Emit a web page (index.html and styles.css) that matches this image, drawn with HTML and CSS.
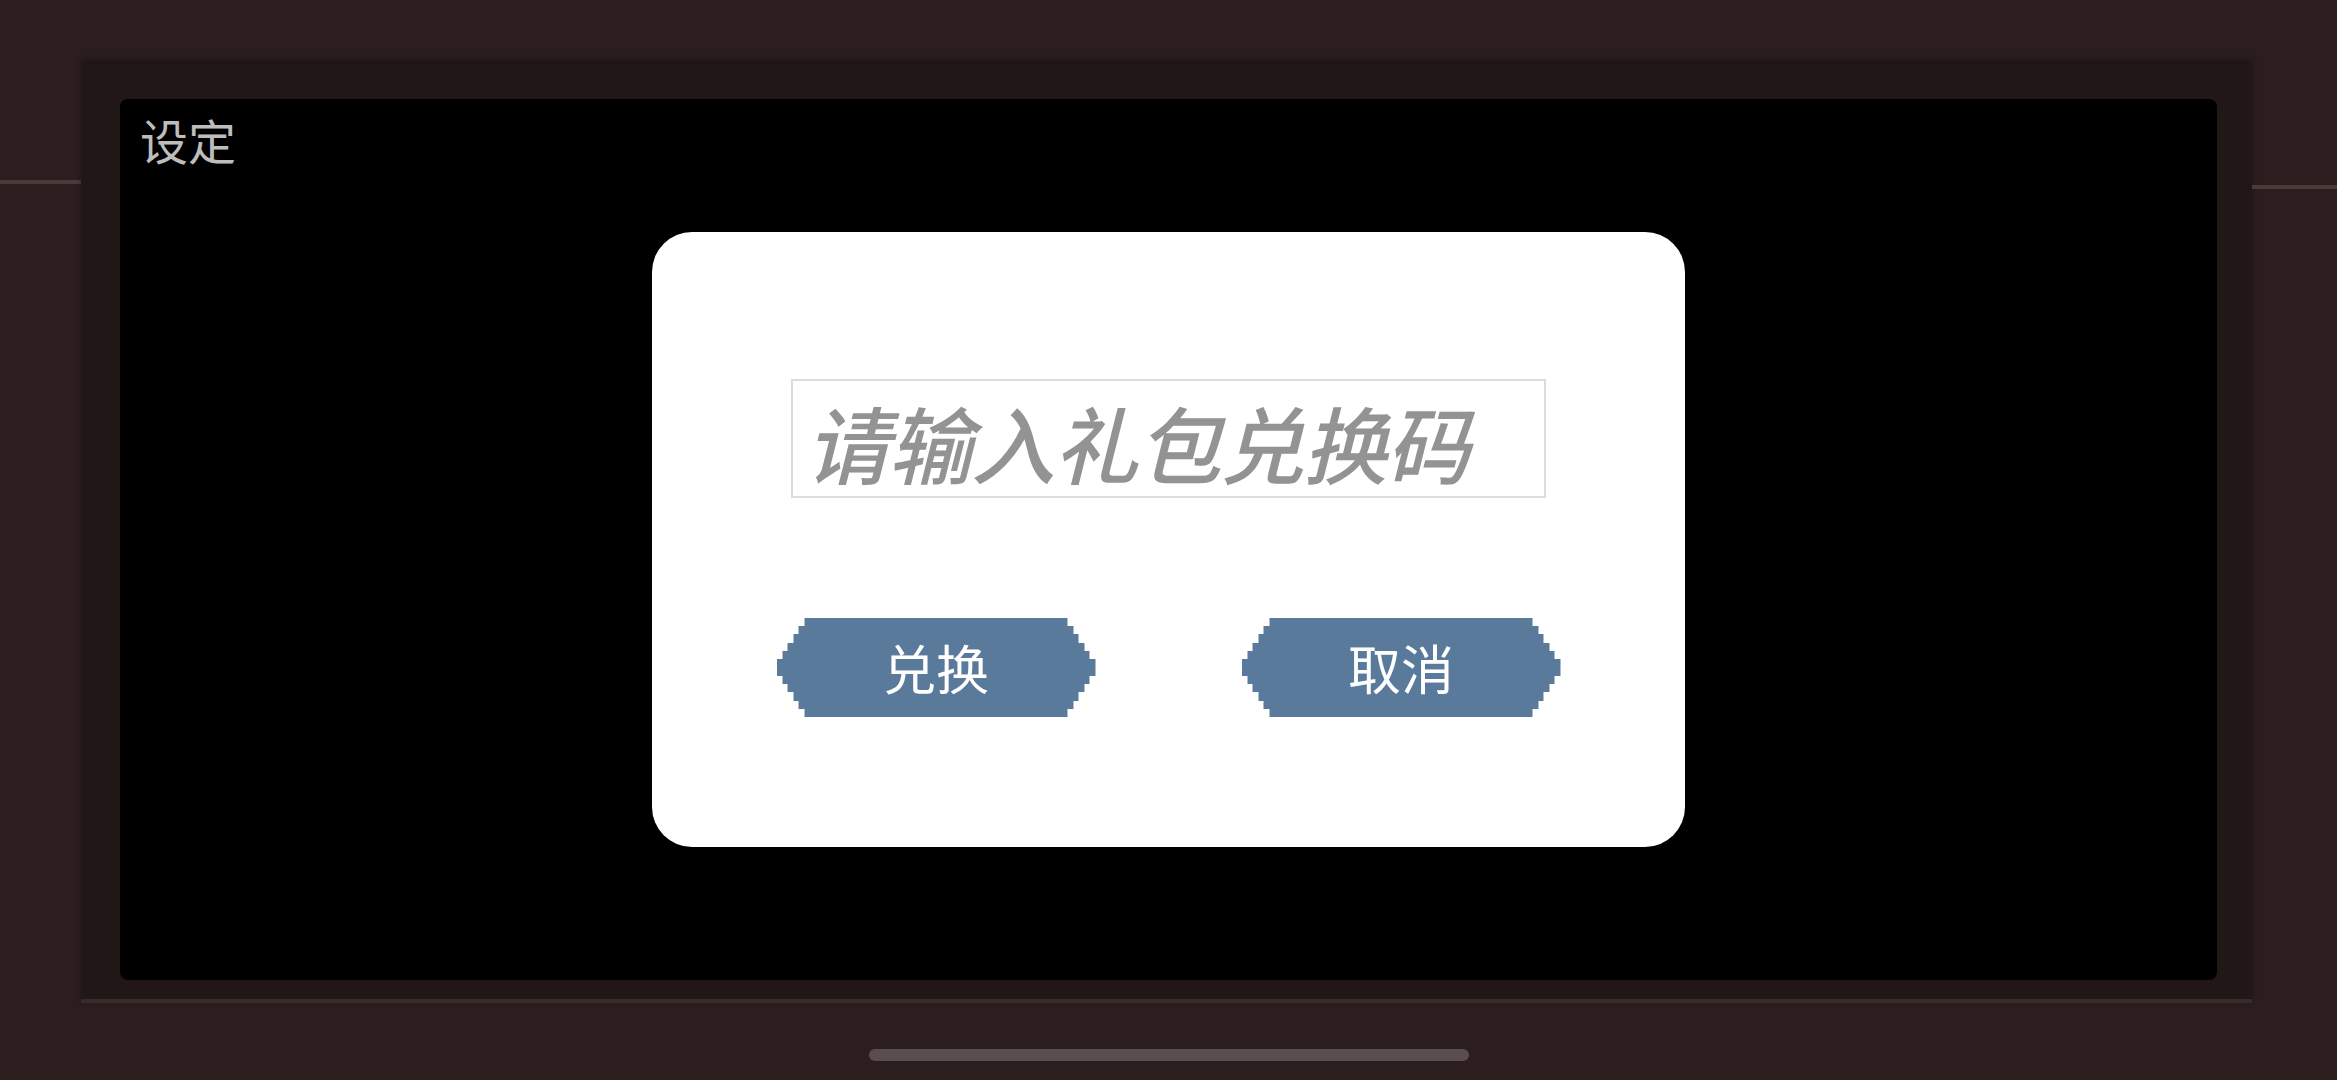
FILE: index.html
```html
<!DOCTYPE html>
<html lang="zh-CN">
<head>
    <meta charset="UTF-8">
    <meta name="viewport" content="width=device-width, initial-scale=1.0">
    <title>设定</title>
    <link rel="stylesheet" href="styles.css">
</head>
<body>
    <div class="side side-left"><div class="side-line"></div></div>
    <div class="frame">
        <div class="screen">
            <div class="title">设定</div>
            <div class="dialog">
                <input class="code-input" type="text" placeholder="请输入礼包兑换码">
                <div class="actions">
                    <button class="pixel-btn">兑换</button>
                    <button class="pixel-btn">取消</button>
                </div>
            </div>
        </div>
    </div>
    <div class="side side-right"><div class="side-line"></div></div>
    <div class="home-row"><div class="home-bar"></div></div>
</body>
</html>
```

FILE: styles.css
```css
html, body {
    margin: 0;
    padding: 0;
}
body {
    width: 2337px;
    height: 1080px;
    overflow: hidden;
    background-color: #2c1e1e;
    font-family: "Noto Sans CJK SC", "Noto Sans", sans-serif;
    display: grid;
    grid-template-columns: 81px 1fr 85px;
    grid-template-rows: 63px 940px 1fr;
}
.side {
    grid-row: 2;
}
.side-left {
    grid-column: 1;
    padding-top: 117px;
}
.side-right {
    grid-column: 3;
    padding-top: 122px;
}
.side-line {
    height: 4px;
    background-color: #4a3b3b;
}
.frame {
    grid-column: 2;
    grid-row: 2;
    background-color: #221717;
    border-bottom: 4px solid #3a2a2a;
    box-shadow: 0 -3px 6px rgba(0, 0, 0, 0.35);
    padding: 36px 35px 19px 39px;
    display: flex;
}
.screen {
    flex: 1;
    background-color: #000;
    border-radius: 8px;
    display: grid;
}
.title {
    grid-area: 1 / 1;
    justify-self: start;
    align-self: start;
    margin: 12px 0 0 20px;
    font-size: 48px;
    line-height: 1.2;
    color: #bdbdbd;
    -webkit-font-smoothing: none;
}
.dialog {
    grid-area: 1 / 1;
    justify-self: center;
    align-self: center;
    width: 1033px;
    height: 615px;
    box-sizing: border-box;
    background-color: #fff;
    border-radius: 40px;
    padding-top: 147px;
    display: flex;
    flex-direction: column;
    align-items: center;
    gap: 120px;
}
.code-input {
    width: 755px;
    height: 119px;
    box-sizing: border-box;
    border: 2px solid #dcdcdc;
    padding: 6px 0 0 12px;
    margin: 0;
    font-family: "Noto Sans CJK SC", "Noto Sans", sans-serif;
    font-size: 84px;
    font-weight: 500;
    font-style: italic;
    letter-spacing: -1px;
    color: #555;
    outline: none;
    background: #fff;
}
.code-input::placeholder {
    color: #939393;
}
.actions {
    display: flex;
    gap: 146px;
}
.pixel-btn {
    width: 319px;
    height: 99px;
    border: none;
    padding: 0 0 2px 0;
    margin: 0;
    background-color: #5a7a9c;
    color: #fff;
    font-family: "Noto Sans CJK SC", "Noto Sans", sans-serif;
    font-size: 53px;
    cursor: pointer;
    clip-path: polygon(28px 0, 291px 0, 291px 8px, 297px 8px, 297px 16px, 302px 16px, 302px 25px, 308px 25px, 308px 33px, 313px 33px, 313px 41px, 319px 41px, 319px 58px, 313px 58px, 313px 66px, 308px 66px, 308px 74px, 302px 74px, 302px 83px, 297px 83px, 297px 91px, 291px 91px, 291px 99px, 28px 99px, 28px 91px, 22px 91px, 22px 83px, 17px 83px, 17px 74px, 11px 74px, 11px 66px, 6px 66px, 6px 58px, 0 58px, 0 41px, 6px 41px, 6px 33px, 11px 33px, 11px 25px, 17px 25px, 17px 16px, 22px 16px, 22px 8px, 28px 8px);
}
.home-row {
    grid-column: 1 / 4;
    grid-row: 3;
    display: flex;
    justify-content: center;
    padding-top: 46px;
}
.home-bar {
    width: 600px;
    height: 12px;
    border-radius: 6px;
    background-color: #5a4d4d;
}
```
